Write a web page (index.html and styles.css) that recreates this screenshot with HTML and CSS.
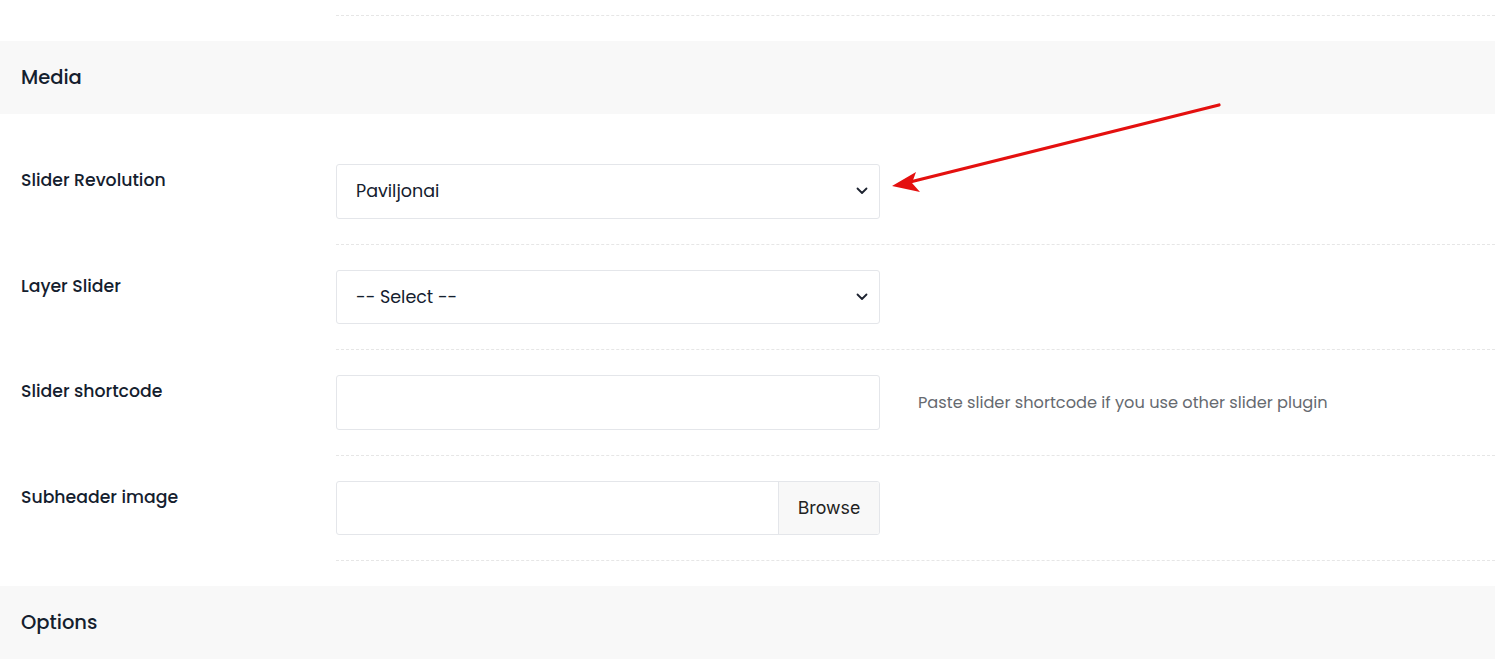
FILE: index.html
```html
<!DOCTYPE html>
<html lang="en">
<head>
<meta charset="utf-8">
<title>Media</title>
<link rel="stylesheet" href="styles.css">
</head>
<body>
<div class="page">
  <div class="row row-prev">
    <div class="label"></div>
    <div class="field-cell"></div>
  </div>

  <div class="section-head"><h2>Media</h2></div>

  <div class="section-body">
    <div class="row">
      <div class="label">Slider Revolution</div>
      <div class="field-cell">
        <div class="select">
          <span class="select-text">Paviljonai</span>
          <svg class="chev" width="12" height="8" viewBox="0 0 12 8"><path d="M1.5 1.5 L6 6 L10.5 1.5" fill="none" stroke="#1d2330" stroke-width="1.8" stroke-linecap="round" stroke-linejoin="round"/></svg>
        </div>
      </div>
    </div>

    <div class="row">
      <div class="label">Layer Slider</div>
      <div class="field-cell">
        <div class="select">
          <span class="select-text">-- Select --</span>
          <svg class="chev" width="12" height="8" viewBox="0 0 12 8"><path d="M1.5 1.5 L6 6 L10.5 1.5" fill="none" stroke="#1d2330" stroke-width="1.8" stroke-linecap="round" stroke-linejoin="round"/></svg>
        </div>
      </div>
    </div>

    <div class="row">
      <div class="label">Slider shortcode</div>
      <div class="field-cell">
        <div class="input"></div>
        <div class="help">Paste slider shortcode if you use other slider plugin</div>
      </div>
    </div>

    <div class="row">
      <div class="label">Subheader image</div>
      <div class="field-cell">
        <div class="input file">
          <span class="file-path"></span>
          <span class="browse">Browse</span>
        </div>
      </div>
    </div>
  </div>

  <div class="section-head"><h2>Options</h2></div>

  <svg class="annot" width="1495" height="659" viewBox="0 0 1495 659">
    <line x1="1219" y1="105" x2="910" y2="182" stroke="#e4100f" stroke-width="3.2" stroke-linecap="round"/>
    <polygon points="892,186 916,172 912,183 920,192" fill="#e4100f"/>
  </svg>
</div>
</body>
</html>
```

FILE: styles.css
```css
* { box-sizing: border-box; }
html, body { margin: 0; padding: 0; background: #fff; }
body {
  font-family: "Poppins", "Open Sans", "Liberation Sans", sans-serif;
  color: #14202e;
  width: 1495px;
  height: 659px;
  overflow: hidden;
}
.page { position: relative; }

.row {
  display: grid;
  grid-template-columns: 336px 1fr;
}
.row-prev { margin-bottom: 25px; }
.row-prev .label { padding: 0; }
.row-prev .field-cell { padding: 0 0 15px 0; }

.section-head {
  background: #f8f8f8;
  height: 73px;
  display: flex;
  align-items: center;
  padding-left: 21px;
}
.section-head h2 {
  margin: 0;
  font-size: 19.5px;
  font-weight: 500;
  color: #14202e;
}

.section-body { padding-top: 25px; margin-bottom: 25px; }

.label {
  padding: 29px 0 0 21px;
  font-size: 17.3px;
  line-height: 24px;
  font-weight: 500;
  color: #14202e;
}

.field-cell {
  display: flex;
  align-items: center;
  padding: 25px 0 25px 0;
  border-bottom: 1px dashed #e6e6e6;
}

.select, .input {
  width: 544px;
  height: 54.5px;
  border: 1px solid #e4e6ea;
  border-radius: 3px;
  background: #fff;
  flex: none;
}
.select {
  display: flex;
  align-items: center;
  justify-content: space-between;
  padding: 0 11px 0 19px;
}
.select-text {
  font-size: 17.5px;
  color: #14202e;
}
.chev { display: block; }

.help {
  margin-left: 38px;
  font-size: 16.2px;
  color: #666a70;
  font-weight: 400;
}

.file { display: flex; overflow: hidden; }
.file-path { flex: 1; }
.browse {
  width: 101px;
  background: #f8f8f8;
  border-left: 1px solid #e4e6ea;
  display: flex;
  align-items: center;
  justify-content: center;
  font-family: "Inter", "Liberation Sans", sans-serif;
  font-size: 17.8px;
  color: #222;
}

.annot {
  position: absolute;
  left: 0;
  top: 0;
  pointer-events: none;
}
```
